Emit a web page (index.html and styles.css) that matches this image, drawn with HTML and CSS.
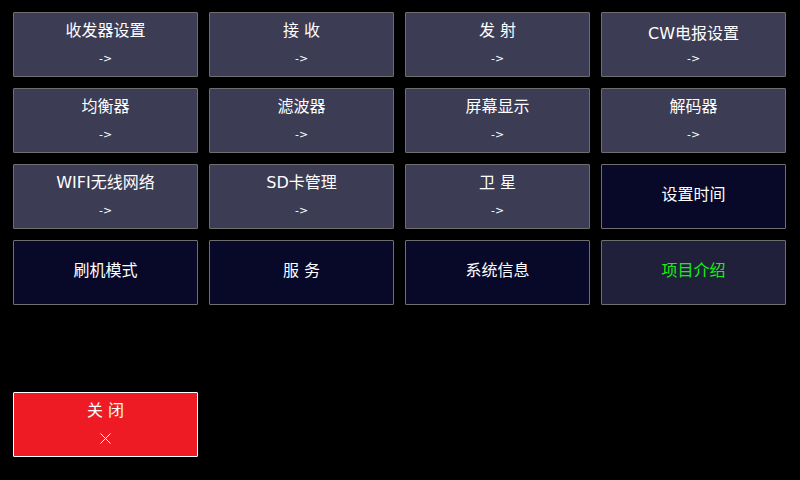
FILE: index.html
```html
<!DOCTYPE html>
<html lang="zh">
<head>
    <meta charset="UTF-8">
    <meta name="viewport" content="width=device-width, initial-scale=1.0">
    <title>菜单</title>
    <link rel="stylesheet" href="styles.css">
</head>
<body>
    <div class="screen">
        <div class="menu">
            <div class="btn sub"><span class="title">收发器设置</span><span class="arrow">-&gt;</span></div>
            <div class="btn sub"><span class="title">接 收</span><span class="arrow">-&gt;</span></div>
            <div class="btn sub"><span class="title">发 射</span><span class="arrow">-&gt;</span></div>
            <div class="btn sub"><span class="title low">CW电报设置</span><span class="arrow">-&gt;</span></div>

            <div class="btn sub"><span class="title">均衡器</span><span class="arrow">-&gt;</span></div>
            <div class="btn sub"><span class="title">滤波器</span><span class="arrow">-&gt;</span></div>
            <div class="btn sub"><span class="title">屏幕显示</span><span class="arrow">-&gt;</span></div>
            <div class="btn sub"><span class="title">解码器</span><span class="arrow">-&gt;</span></div>

            <div class="btn sub"><span class="title">WIFI无线网络</span><span class="arrow">-&gt;</span></div>
            <div class="btn sub"><span class="title">SD卡管理</span><span class="arrow">-&gt;</span></div>
            <div class="btn sub"><span class="title">卫 星</span><span class="arrow">-&gt;</span></div>
            <div class="btn action"><span class="title">设置时间</span></div>

            <div class="btn action"><span class="title">刷机模式</span></div>
            <div class="btn action"><span class="title">服 务</span></div>
            <div class="btn action"><span class="title">系统信息</span></div>
            <div class="btn about"><span class="title">项目介绍</span></div>
        </div>

        <div class="btn close">
            <span class="title">关 闭</span>
            <svg class="x" width="11" height="11" viewBox="0 0 11 11">
                <path d="M0.5 0.5 L10.5 10.5 M10.5 0.5 L0.5 10.5" stroke="#fff" stroke-width="1" fill="none"/>
            </svg>
        </div>
    </div>
</body>
</html>
```

FILE: styles.css
```css
* {
    box-sizing: border-box;
}
body {
    margin: 0;
    background: #000;
    font-family: "DejaVu Sans", "Noto Sans CJK SC", sans-serif;
    color: #fff;
}
.screen {
    width: 800px;
    height: 480px;
    padding: 12px 13px;
}
.menu {
    display: grid;
    grid-template-columns: repeat(4, 185px);
    grid-auto-rows: 65px;
    column-gap: 11px;
    row-gap: 11px;
}
.btn {
    display: flex;
    flex-direction: column;
    align-items: center;
    border: 1px solid #6e6e6e;
    border-radius: 1px;
}
.sub {
    background: #3c3c54;
    padding-top: 8px;
}
.action {
    background: #080929;
    justify-content: center;
}
.about {
    background: #20203b;
    justify-content: center;
    color: #14f014;
}
.action .title,
.about .title {
    margin-top: -4px;
}
.title {
    font-size: 16px;
    line-height: 20px;
    white-space: pre;
}
.title.low {
    margin-top: 3px;
    margin-bottom: -3px;
}
.arrow {
    font-family: "DejaVu Sans", sans-serif;
    font-size: 11px;
    line-height: 16px;
    margin-top: 10px;
}
.close {
    width: 185px;
    height: 65px;
    margin-top: 87px;
    background: #ee1b24;
    border-color: #ffffff;
    padding-top: 8px;
}
.close .x {
    margin-top: 12px;
}
```
